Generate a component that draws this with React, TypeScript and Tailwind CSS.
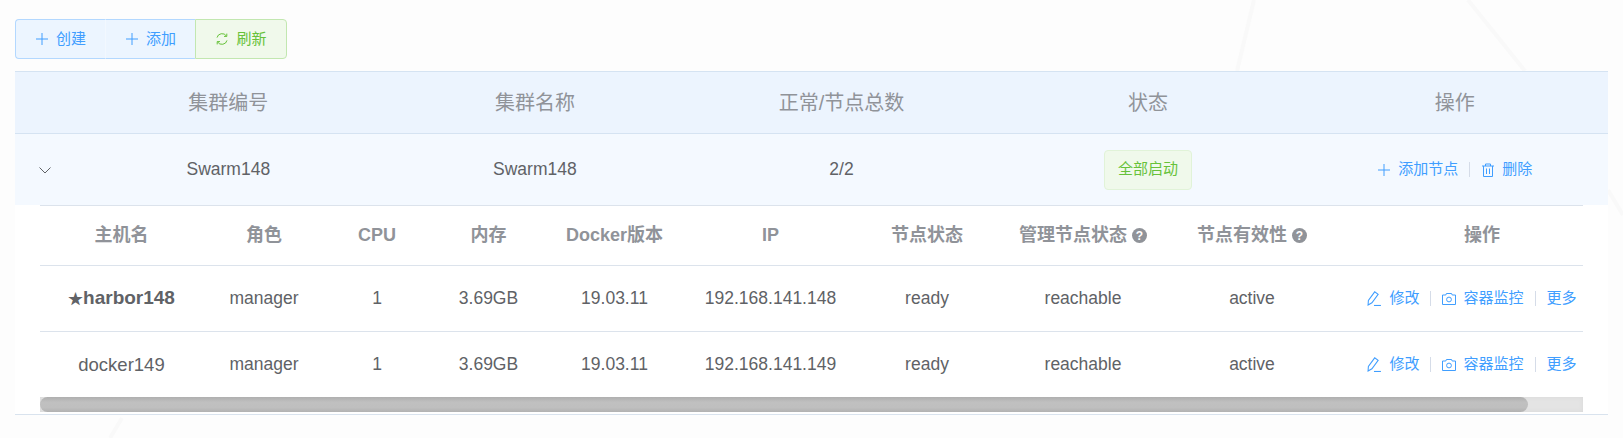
import type { ReactNode } from "react";

const font = "font-['Liberation_Sans','Noto_Sans_CJK_SC',sans-serif]";

function PlusIcon() {
  return (
    <svg width="14" height="14" viewBox="0 0 14 14" fill="none" stroke="currentColor" strokeWidth="1">
      <path d="M7 1v12M1 7h12" />
    </svg>
  );
}

function RefreshIcon() {
  return (
    <svg width="14" height="14" viewBox="0 0 14 14" fill="none" stroke="currentColor" strokeWidth="1">
      <path d="M2 5.600A5.200 5.200 0 0 1 11.400 4" />
      <path d="M12 8.400A5.200 5.200 0 0 1 2.600 10" />
      <path d="M11.800 1.600v2.800H9" />
      <path d="M2.200 12.400V9.600H5" />
    </svg>
  );
}

function TrashIcon() {
  return (
    <svg width="14" height="14" viewBox="0 0 14 14" fill="none" stroke="currentColor" strokeWidth="1">
      <path d="M1 3h12M4.500 3V1h5v2M2.500 3v10.500h9V3M5.500 5.500v5.500M8.500 5.500v5.500" />
    </svg>
  );
}

function EditIcon() {
  return (
    <svg width="15" height="15" viewBox="0 0 14 14" fill="none" stroke="currentColor" strokeWidth="1">
      <path d="M1 13l.3-4.300L7.200 .8l3.200 2.400-5.800 7.800z" />
      <path d="M6.500 13.500h6.500" />
    </svg>
  );
}

function CameraIcon() {
  return (
    <svg width="14" height="14" viewBox="0 0 14 14" fill="none" stroke="currentColor" strokeWidth="1">
      <path d="M.5 3h3.300l.6-1.500h5.200l.6 1.500h3.300v9.500H.5z" />
      <circle cx="7" cy="7.500" r="2.400" />
    </svg>
  );
}

function HelpIcon() {
  return (
    <span className="ml-[5px] inline-flex h-[15px] w-[15px] items-center justify-center rounded-full bg-[#909399] text-[12px] leading-none font-bold text-white">
      ?
    </span>
  );
}

function Divider() {
  return <span className="mx-[11px] h-[15px] w-px bg-[#d5dce8]" />;
}

function Action({ icon, children }: { icon: ReactNode; children: ReactNode }) {
  return (
    <span className="flex items-center gap-[7px] text-[15px] text-[#409eff]">
      {icon}
      {children}
    </span>
  );
}

const nodes = [
  { name: "harbor148", ip: "192.168.141.148", leader: true },
  { name: "docker149", ip: "192.168.141.149", leader: false },
];

const nodeCols = "grid grid-cols-[163px_122px_104px_119px_133px_179px_134px_178px_160px_300px] w-[1592px]";
const clusterCols = "grid grid-cols-[60px_repeat(5,1fr)]";

export default function App() {
  return (
    <div className={`relative h-[438px] overflow-hidden bg-[#fdfdfd] pt-[19px] ${font}`}>
      {/* faint background lines */}
      <svg className="absolute inset-0" width="1623" height="438" fill="none" stroke="#f9f9f9" strokeWidth="4">
        <path d="M1254 0L1237 71" />
        <path d="M1468 0L1525 71" />
        <path d="M1608 190L1623 215" />
        <path d="M122 418L110 438" />
      </svg>

      <div className="relative pl-[15px]">
        <div className="flex h-[40px] w-[272px] text-[15px]">
          <button className="flex w-[90px] items-center justify-center gap-[7px] rounded-l-[4px] border border-r-0 border-[#b3d8ff] bg-[#ecf5ff] text-[#409eff]">
            <PlusIcon />
            创建
          </button>
          <button className="flex w-[90px] items-center justify-center gap-[7px] border border-x-0 border-l border-[#b3d8ff] border-l-[#f2f8ff] bg-[#ecf5ff] text-[#409eff]">
            <PlusIcon />
            添加
          </button>
          <button className="flex w-[92px] items-center justify-center gap-[7px] rounded-r-[4px] border border-[#c2e7b0] bg-[#f0f9eb] text-[#67c23a]">
            <RefreshIcon />
            刷新
          </button>
        </div>

        <div className="mt-[12px] w-[1593px]">
          <div className={`${clusterCols} h-[63px] items-center border-y border-[#d5e3f2] bg-[#ecf4fe] text-center text-[20px] text-[#909399]`}>
            <span />
            <span>集群编号</span>
            <span>集群名称</span>
            <span>正常/节点总数</span>
            <span>状态</span>
            <span>操作</span>
          </div>

          <div className={`${clusterCols} h-[71px] items-center bg-[#f4f9ff] text-center text-[17.5px] text-[#606266]`}>
            <span className="flex justify-center">
              <svg width="14" height="14" viewBox="0 0 14 14" fill="none" stroke="#606266" strokeWidth="1">
                <path d="M1.500 4.500L7 10l5.500-5.500" />
              </svg>
            </span>
            <span>Swarm148</span>
            <span>Swarm148</span>
            <span>2/2</span>
            <span className="flex justify-center">
              <span className="flex h-[40px] w-[88px] items-center justify-center rounded-[4px] border border-[#e1f3d8] bg-[#f0f9eb] text-[15px] text-[#67c23a]">
                全部启动
              </span>
            </span>
            <span className="flex items-center justify-center">
              <Action icon={<PlusIcon />}>添加节点</Action>
              <Divider />
              <Action icon={<TrashIcon />}>删除</Action>
            </span>
          </div>

          <div className="bg-white px-[25px] pb-[2px]">
            <div className="overflow-hidden border-t border-[#dce3ec]">
              <div className={`${nodeCols} h-[59px] items-center text-center text-[18px] font-bold text-[#909399]`}>
                <span>主机名</span>
                <span>角色</span>
                <span>CPU</span>
                <span>内存</span>
                <span>Docker版本</span>
                <span>IP</span>
                <span>节点状态</span>
                <span className="flex items-center justify-center">管理节点状态<HelpIcon /></span>
                <span className="flex items-center justify-center">节点有效性<HelpIcon /></span>
                <span>操作</span>
              </div>
              {nodes.map((node) => (
                <div key={node.name} className={`${nodeCols} h-[66px] items-center border-t border-[#dce3ec] text-center text-[17.5px] text-[#606266]`}>
                  {node.leader ? (
                    <span className="font-bold">
                      <span className="text-[15px]">★</span>
                      <span className="text-[19px]">{node.name}</span>
                    </span>
                  ) : (
                    <span className="text-[18.500px]">{node.name}</span>
                  )}
                  <span>manager</span>
                  <span>1</span>
                  <span>3.69GB</span>
                  <span>19.03.11</span>
                  <span>{node.ip}</span>
                  <span>ready</span>
                  <span>reachable</span>
                  <span>active</span>
                  <span className="flex items-center justify-center pr-[20px]">
                    <Action icon={<EditIcon />}>修改</Action>
                    <Divider />
                    <Action icon={<CameraIcon />}>容器监控</Action>
                    <Divider />
                    <Action icon={null}>更多</Action>
                  </span>
                </div>
              ))}
              <div className="h-[15px] bg-[#e4e4e4] shadow-[inset_0_0_4px_#d8d8d8]">
                <div className="h-full w-[1488px] rounded-full bg-[linear-gradient(180deg,#afafaf,#c0c0c0_35%,#bfbfbf_70%,#b2b2b2)]" />
              </div>
            </div>
          </div>

          <div className="border-t border-[#d9e3ee]" />
        </div>
      </div>
    </div>
  );
}
